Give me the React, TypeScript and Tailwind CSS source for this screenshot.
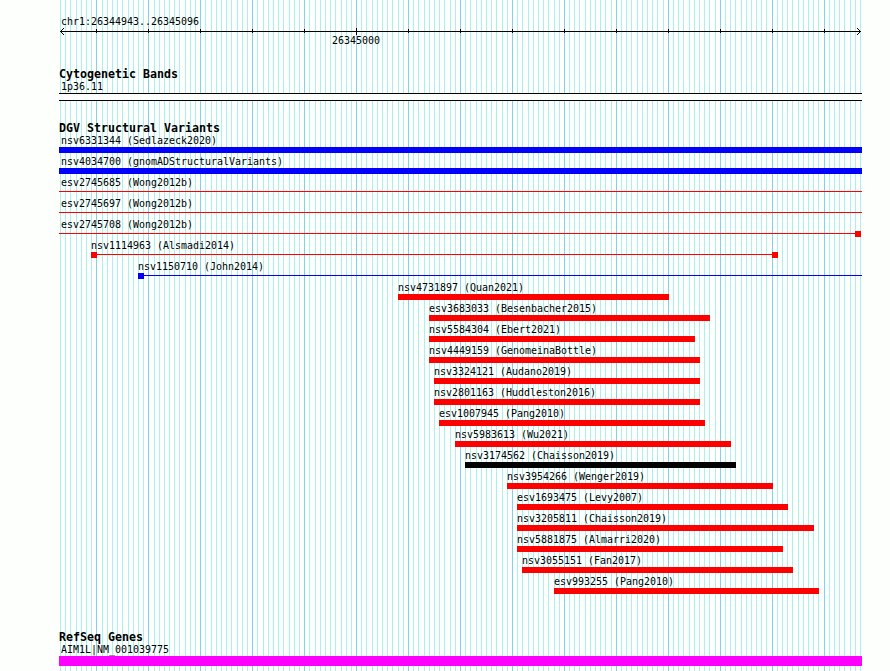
import type { ReactNode } from 'react'

interface Feature {
  label: string
  start: number
  end: number
  color?: string
  // thin features are a line with optional square breakpoints
  thin?: boolean
  left?: boolean
  right?: boolean
}

const LEFT = 59
const RIGHT = 862
const PX_PER_BASE = 800 / 154

const features: Feature[] = [
  { label: 'nsv6331344 (Sedlazeck2020)', start: 59, end: 862, color: '#0000ff' },
  { label: 'nsv4034700 (gnomADStructuralVariants)', start: 59, end: 862, color: '#0000ff' },
  { label: 'esv2745685 (Wong2012b)', start: 59, end: 862, thin: true },
  { label: 'esv2745697 (Wong2012b)', start: 59, end: 862, thin: true },
  { label: 'esv2745708 (Wong2012b)', start: 59, end: 861, thin: true, right: true },
  { label: 'nsv1114963 (Alsmadi2014)', start: 91, end: 778, thin: true, left: true, right: true },
  { label: 'nsv1150710 (John2014)', start: 138, end: 862, color: '#0000ff', thin: true, left: true },
  { label: 'nsv4731897 (Quan2021)', start: 398, end: 669 },
  { label: 'esv3683033 (Besenbacher2015)', start: 429, end: 710 },
  { label: 'nsv5584304 (Ebert2021)', start: 429, end: 695 },
  { label: 'nsv4449159 (GenomeinaBottle)', start: 429, end: 700 },
  { label: 'nsv3324121 (Audano2019)', start: 434, end: 700 },
  { label: 'nsv2801163 (Huddleston2016)', start: 434, end: 700 },
  { label: 'esv1007945 (Pang2010)', start: 439, end: 705 },
  { label: 'nsv5983613 (Wu2021)', start: 455, end: 731 },
  { label: 'nsv3174562 (Chaisson2019)', start: 465, end: 736, color: '#000000' },
  { label: 'nsv3954266 (Wenger2019)', start: 507, end: 773 },
  { label: 'esv1693475 (Levy2007)', start: 517, end: 788 },
  { label: 'nsv3205811 (Chaisson2019)', start: 517, end: 814 },
  { label: 'nsv5881875 (Almarri2020)', start: 517, end: 783 },
  { label: 'nsv3055151 (Fan2017)', start: 522, end: 793 },
  { label: 'esv993255 (Pang2010)', start: 554, end: 819 },
]

const gridLines = Array.from({ length: 155 }, (_, i) => ({
  x: Math.round(60 + i * PX_PER_BASE),
  major: i % 10 === 7,
}))

const ticks = gridLines.filter((l) => l.major).map((l) => l.x)

function Grid() {
  return (
    <svg className="absolute inset-0" width="890" height="671" shapeRendering="crispEdges">
      {gridLines.map(({ x, major }) => (
        <rect key={x} x={x} y="0" width="1" height="671" fill={major ? '#87ceeb' : '#afeeee'} />
      ))}
    </svg>
  )
}

function Label({ children }: { children: ReactNode }) {
  return (
    <div className="h-[10px] w-max origin-left scale-x-[0.906] whitespace-pre text-[11px] leading-[10px]">
      {children}
    </div>
  )
}

function Heading({ children }: { children: ReactNode }) {
  return (
    <h2 className="h-[12px] w-max whitespace-pre text-[11.63px] leading-[10px] font-bold">
      {children}
    </h2>
  )
}

function Ruler() {
  return (
    <svg className="block" width="890" height="7" shapeRendering="crispEdges">
      <rect x="60" y="3" width="801" height="1" />
      {ticks.map((x) =>
        x === 356 ? (
          <rect key={x} x={x} y="0" width="1" height="7" />
        ) : (
          <rect key={x} x={x} y="1" width="1" height="4" />
        )
      )}
      {[1, 2, 3].map((d) => (
        <g key={d}>
          <rect x={60 + d} y={3 - d} width="1" height="1" />
          <rect x={60 + d} y={3 + d} width="1" height="1" />
          <rect x={860 - d} y={3 - d} width="1" height="1" />
          <rect x={860 - d} y={3 + d} width="1" height="1" />
        </g>
      ))}
    </svg>
  )
}

function FeatureRow({ feature }: { feature: Feature }) {
  const { label, start, end, color = '#ff0000', thin, left, right } = feature
  return (
    <div className="h-[21px]" style={{ marginLeft: start }}>
      <div className="h-[11px]" style={{ marginLeft: start === LEFT ? 1.5 : -0.5 }}>
        <Label>{label}</Label>
      </div>
      {thin ? (
        <div className="flex h-[6px] items-start" style={{ width: end - start }}>
          {left && <span className="size-[6px]" style={{ background: color }} />}
          <span className="mt-[2px] h-px flex-1" style={{ background: color }} />
          {right && <span className="size-[6px]" style={{ background: color }} />}
        </div>
      ) : (
        <div className="h-[6px]" style={{ width: end - start, background: color }} />
      )}
    </div>
  )
}

export default function App() {
  return (
    <div className="relative h-[671px] w-[890px] overflow-hidden bg-[#fdfffc] font-['DejaVu_Sans_Mono',monospace] text-black">
      <Grid />
      <main className="relative pt-[17px]">
        <section className="h-[52px]">
          <div className="ml-[60.5px] h-[11px]">
            <Label>chr1:26344943..26345096</Label>
          </div>
          <Ruler />
          <div className="mt-px ml-[331.5px]">
            <Label>26345000</Label>
          </div>
        </section>

        <section className="ml-[59px] h-[54px]">
          <Heading>Cytogenetic Bands</Heading>
          <div className="ml-[1.5px] h-[12px] pt-px">
            <Label>1p36.11</Label>
          </div>
          <div className="h-[8px] border-y border-black bg-[#fdfffc]" style={{ width: RIGHT - LEFT }} />
        </section>

        <section className="h-[509px]">
          <div className="ml-[59px] h-[13px]">
            <Heading>DGV Structural Variants</Heading>
          </div>
          {features.map((f) => (
            <FeatureRow key={f.label} feature={f} />
          ))}
        </section>

        <section className="ml-[59px]">
          <Heading>RefSeq Genes</Heading>
          <div className="ml-[1.5px] h-[12px] pt-px">
            <Label>AIM1L|NM_001039775</Label>
          </div>
          <div className="h-[10px] bg-[#ff00ff]" style={{ width: RIGHT - LEFT }} />
        </section>
      </main>
    </div>
  )
}
